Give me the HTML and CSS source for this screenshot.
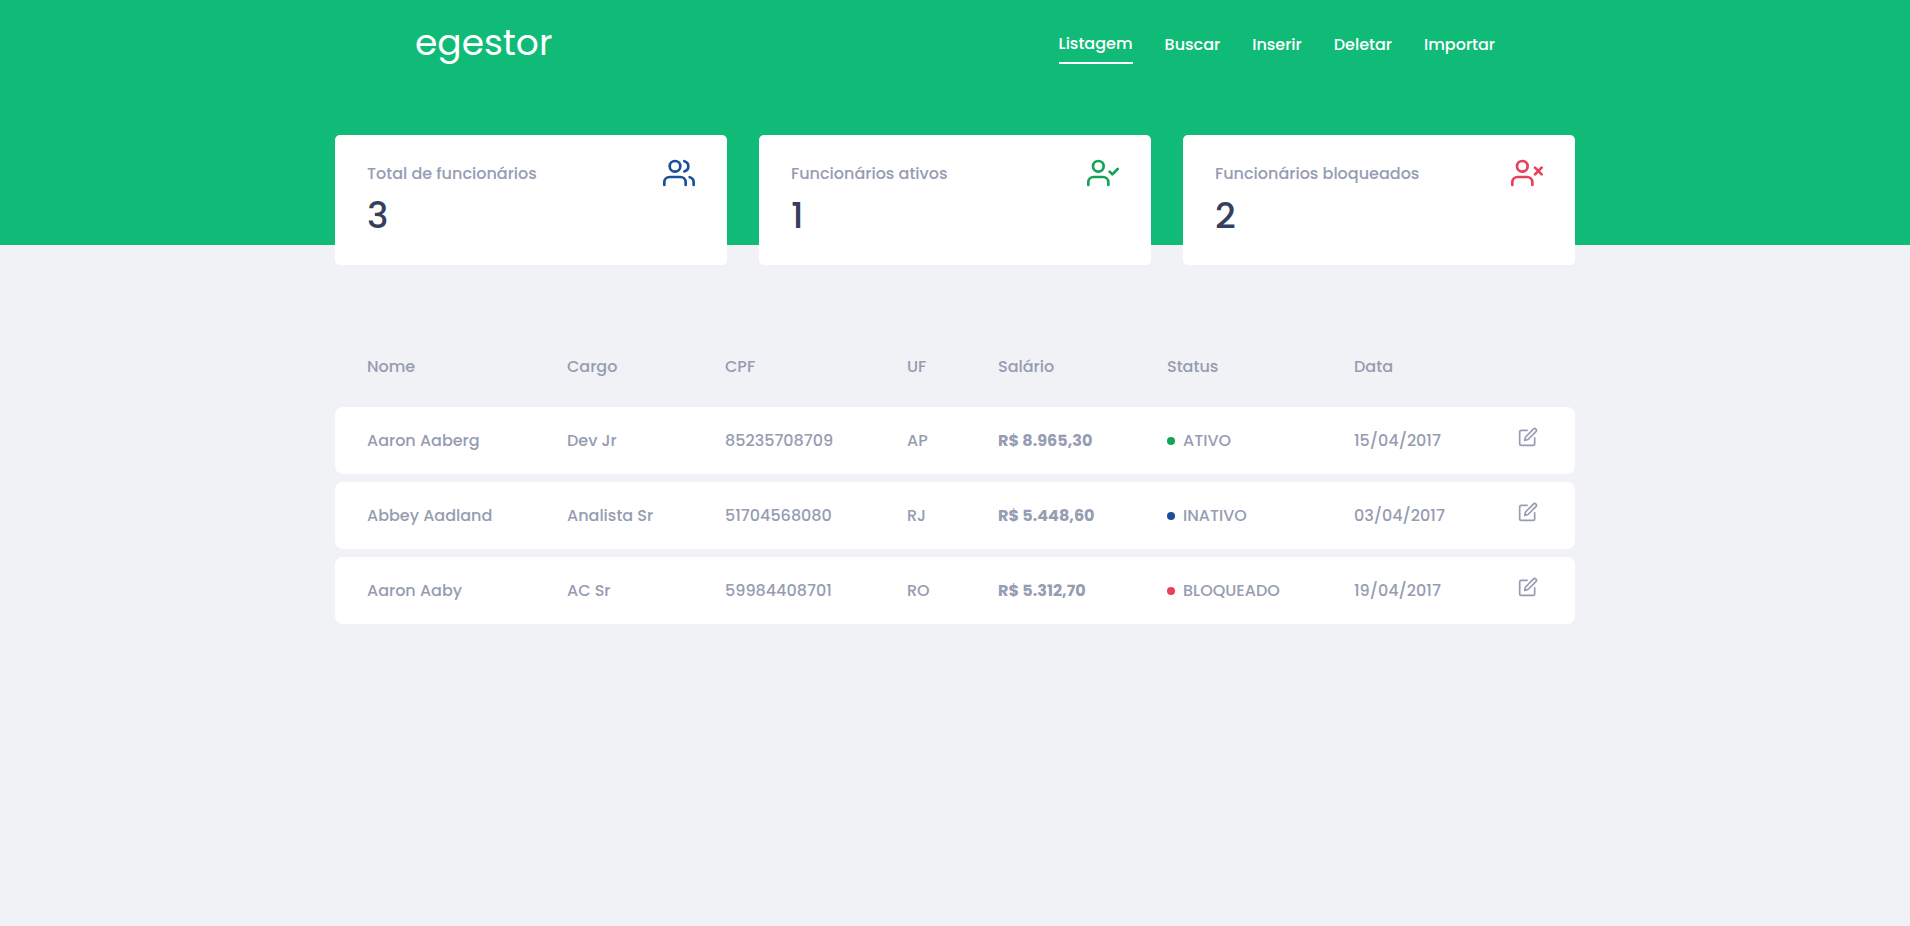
FILE: index.html
```html
<!DOCTYPE html>
<html lang="pt-BR">
<head>
<meta charset="utf-8">
<meta name="viewport" content="width=device-width, initial-scale=1">
<title>egestor</title>
<link rel="stylesheet" href="styles.css">
</head>
<body>
<svg class="sprite" aria-hidden="true">
  <symbol id="edit" viewBox="0 0 24 24">
    <path d="M11 4H4a2 2 0 0 0-2 2v14a2 2 0 0 0 2 2h14a2 2 0 0 0 2-2v-7"/>
    <path d="M18.5 2.5a2.121 2.121 0 0 1 3 3L12 15l-4 1 1-4 9.500-9.500z"/>
  </symbol>
</svg>
<header class="header">
  <div class="header-content">
    <a class="logo" href="#">egestor</a>
    <nav class="nav">
      <a class="active" href="#">Listagem</a>
      <a href="#">Buscar</a>
      <a href="#">Inserir</a>
      <a href="#">Deletar</a>
      <a href="#">Importar</a>
    </nav>
  </div>
</header>
<main class="container">
  <section class="cards">
    <article class="card">
      <header class="card-head">
        <p>Total de funcionários</p>
        <svg class="icon blue" viewBox="0 0 24 24"><path d="M17 21v-2a4 4 0 0 0-4-4H5a4 4 0 0 0-4 4v2"/><circle cx="9" cy="7" r="4"/><path d="M23 21v-2a4 4 0 0 0-3-3.870"/><path d="M16 3.130a4 4 0 0 1 0 7.750"/></svg>
      </header>
      <strong class="total">3</strong>
    </article>
    <article class="card">
      <header class="card-head">
        <p>Funcionários ativos</p>
        <svg class="icon green" viewBox="0 0 24 24"><path d="M16 21v-2a4 4 0 0 0-4-4H5a4 4 0 0 0-4 4v2"/><circle cx="8.500" cy="7" r="4"/><polyline points="17 11 19 13 23 9"/></svg>
      </header>
      <strong class="total">1</strong>
    </article>
    <article class="card">
      <header class="card-head">
        <p>Funcionários bloqueados</p>
        <svg class="icon red" viewBox="0 0 24 24"><path d="M16 21v-2a4 4 0 0 0-4-4H5a4 4 0 0 0-4 4v2"/><circle cx="8.500" cy="7" r="4"/><path d="M18 8l5 5M23 8l-5 5"/></svg>
      </header>
      <strong class="total">2</strong>
    </article>
  </section>
  <table class="employees">
    <colgroup>
      <col class="c-name"><col class="c-role"><col class="c-cpf"><col class="c-uf"><col class="c-pay"><col class="c-status"><col class="c-date"><col class="c-edit">
    </colgroup>
    <thead>
      <tr><th>Nome</th><th>Cargo</th><th>CPF</th><th>UF</th><th>Salário</th><th>Status</th><th>Data</th><th></th></tr>
    </thead>
    <tbody>
      <tr>
        <td>Aaron Aaberg</td><td>Dev Jr</td><td>85235708709</td><td>AP</td><td class="pay">R$ 8.965,30</td>
        <td><span class="status active-dot">ATIVO</span></td><td>15/04/2017</td>
        <td class="edit"><button type="button" aria-label="Editar Aaron Aaberg"><svg><use href="#edit"/></svg></button></td>
      </tr>
      <tr>
        <td>Abbey Aadland</td><td>Analista Sr</td><td>51704568080</td><td>RJ</td><td class="pay">R$ 5.448,60</td>
        <td><span class="status inactive-dot">INATIVO</span></td><td>03/04/2017</td>
        <td class="edit"><button type="button" aria-label="Editar Abbey Aadland"><svg><use href="#edit"/></svg></button></td>
      </tr>
      <tr>
        <td>Aaron Aaby</td><td>AC Sr</td><td>59984408701</td><td>RO</td><td class="pay">R$ 5.312,70</td>
        <td><span class="status blocked-dot">BLOQUEADO</span></td><td>19/04/2017</td>
        <td class="edit"><button type="button" aria-label="Editar Aaron Aaby"><svg><use href="#edit"/></svg></button></td>
      </tr>
    </tbody>
  </table>
</main>
</body>
</html>
```
FILE: styles.css
```css
* { box-sizing: border-box; margin: 0; padding: 0; }

body {
  background: #f0f2f5;
  color: #969cb2;
  font: 500 16px/24px Poppins, Inter, sans-serif;
}

.sprite { display: none; }

svg {
  fill: none;
  stroke: currentColor;
  stroke-width: 2;
  stroke-linecap: round;
  stroke-linejoin: round;
}

.header {
  height: 245px;
  background: #10bb78;
}

.header-content {
  max-width: 1240px;
  margin: 0 auto;
  padding: 24px 80px 0;
  display: flex;
  align-items: center;
  justify-content: space-between;
}

.logo {
  padding-bottom: 2px;
  color: #fff;
  font-size: 36px;
  font-weight: 400;
  line-height: 38px;
  text-decoration: none;
}

.nav {
  display: flex;
  align-items: center;
  gap: 32px;
}

.nav a {
  padding-top: 2px;
  color: #fff;
  text-decoration: none;
}

.nav .active {
  padding: 8px 0 6px;
  border-bottom: 2px solid #fff;
}

.container {
  max-width: 1240px;
  margin: -110px auto 0;
}

.cards {
  display: grid;
  grid-template-columns: repeat(3, 1fr);
  gap: 32px;
}

.card {
  padding: 22px 32px;
  border-radius: 5px;
  background: #fff;
}

.card-head {
  display: flex;
  align-items: center;
  justify-content: space-between;
}

.card-head p { padding-top: 2px; }

.icon { width: 32px; height: 32px; }
.blue { color: #1a4f9c; }
.green { color: #12a454; }
.red { color: #e83f5b; }

.total {
  display: block;
  color: #363f5f;
  font-size: 36px;
  font-weight: 500;
  line-height: 54px;
}

.employees {
  width: 100%;
  margin-top: 59px;
  border-spacing: 0 8px;
  table-layout: fixed;
}

.c-name { width: 200px; }
.c-role { width: 158px; }
.c-cpf { width: 182px; }
.c-uf { width: 91px; }
.c-pay { width: 169px; }
.c-status { width: 187px; }
.c-date { width: 164px; }
.c-edit { width: 89px; }

.employees th,
.employees td {
  padding: 20px 0 20px 32px;
  font-weight: 500;
  line-height: 27px;
  text-align: left;
  white-space: nowrap;
}

.employees th { padding-top: 21px; padding-bottom: 19px; }
.employees td { background: #fff; }
.employees td:first-child { border-radius: 8px 0 0 8px; }
.employees td:last-child { border-radius: 0 8px 8px 0; }
.employees .pay { font-weight: 700; }
.employees .edit { vertical-align: top; }

.status {
  display: flex;
  align-items: center;
  gap: 8px;
}

.status::before {
  content: "";
  width: 8px;
  height: 8px;
  border-radius: 50%;
  background: currentColor;
}

.active-dot::before { background: #12a454; }
.inactive-dot::before { background: #1a4f9c; }
.blocked-dot::before { background: #e83f5b; }

.edit button {
  display: block;
  border: 0;
  background: none;
  color: inherit;
  cursor: pointer;
}

.edit svg {
  display: block;
  width: 20px;
  height: 20px;
}
```
